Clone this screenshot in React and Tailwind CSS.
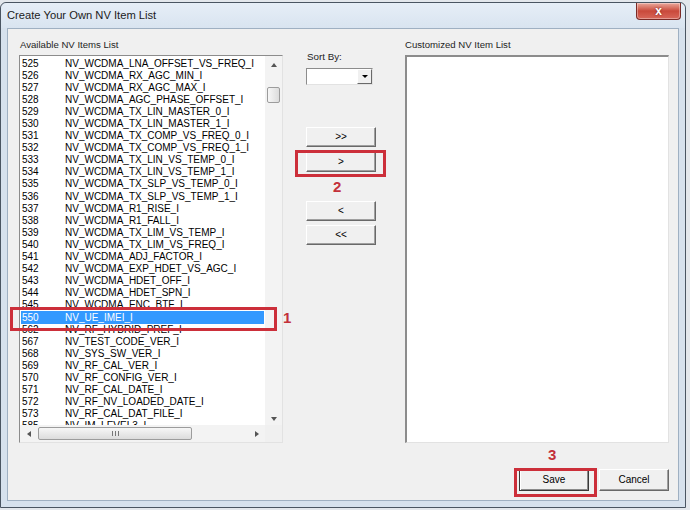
import React from "react";

const items = [
  ["525", "NV_WCDMA_LNA_OFFSET_VS_FREQ_I"],
  ["526", "NV_WCDMA_RX_AGC_MIN_I"],
  ["527", "NV_WCDMA_RX_AGC_MAX_I"],
  ["528", "NV_WCDMA_AGC_PHASE_OFFSET_I"],
  ["529", "NV_WCDMA_TX_LIN_MASTER_0_I"],
  ["530", "NV_WCDMA_TX_LIN_MASTER_1_I"],
  ["531", "NV_WCDMA_TX_COMP_VS_FREQ_0_I"],
  ["532", "NV_WCDMA_TX_COMP_VS_FREQ_1_I"],
  ["533", "NV_WCDMA_TX_LIN_VS_TEMP_0_I"],
  ["534", "NV_WCDMA_TX_LIN_VS_TEMP_1_I"],
  ["535", "NV_WCDMA_TX_SLP_VS_TEMP_0_I"],
  ["536", "NV_WCDMA_TX_SLP_VS_TEMP_1_I"],
  ["537", "NV_WCDMA_R1_RISE_I"],
  ["538", "NV_WCDMA_R1_FALL_I"],
  ["539", "NV_WCDMA_TX_LIM_VS_TEMP_I"],
  ["540", "NV_WCDMA_TX_LIM_VS_FREQ_I"],
  ["541", "NV_WCDMA_ADJ_FACTOR_I"],
  ["542", "NV_WCDMA_EXP_HDET_VS_AGC_I"],
  ["543", "NV_WCDMA_HDET_OFF_I"],
  ["544", "NV_WCDMA_HDET_SPN_I"],
  ["545", "NV_WCDMA_ENC_BTF_I"],
  ["550", "NV_UE_IMEI_I"],
  ["562", "NV_RF_HYBRID_PREF_I"],
  ["567", "NV_TEST_CODE_VER_I"],
  ["568", "NV_SYS_SW_VER_I"],
  ["569", "NV_RF_CAL_VER_I"],
  ["570", "NV_RF_CONFIG_VER_I"],
  ["571", "NV_RF_CAL_DATE_I"],
  ["572", "NV_RF_NV_LOADED_DATE_I"],
  ["573", "NV_RF_CAL_DAT_FILE_I"],
  ["585", "NV_IM_LEVEL3_I"],
];

// classic 3D push button
const pushBtn =
  "flex items-center justify-center w-[70px] h-[20px] border border-t-white border-l-white border-r-[#696969] border-b-[#696969] bg-[#f0f0f0] shadow-[inset_-1px_-1px_0_#a0a0a0] text-[10px] leading-none text-black";

function VScroll() {
  return (
    <div className="flex w-[17px] flex-col bg-[#f3f3f3]">
      <div className="flex h-[17px] items-center justify-center">
        <div className="h-0 w-0 border-x-[3.5px] border-b-[4px] border-x-transparent border-b-[#555]" />
      </div>
      <div className="flex flex-1 flex-col items-center pt-[14px]">
        <div className="h-[16px] w-[13px] rounded-[2px] border border-[#9c9c9c] bg-gradient-to-r from-[#f7f7f7] to-[#dcdcdc]" />
      </div>
      <div className="flex h-[17px] items-center justify-center pt-[4px]">
        <div className="h-0 w-0 border-x-[3.5px] border-t-[4px] border-x-transparent border-t-[#555]" />
      </div>
    </div>
  );
}

function HScroll() {
  return (
    <div className="flex h-[17px] flex-1 items-center bg-[#f3f3f3]">
      <div className="flex h-full w-[17px] items-center justify-center">
        <div className="h-0 w-0 border-y-[3.5px] border-r-[4px] border-y-transparent border-r-[#555]" />
      </div>
      <div className="ml-[1px] flex h-[13px] w-[154px] items-center justify-center gap-[2px] rounded-[2px] border border-[#9c9c9c] bg-gradient-to-b from-[#f7f7f7] to-[#dcdcdc]">
        <div className="h-[5px] w-[1px] bg-[#777]" />
        <div className="h-[5px] w-[1px] bg-[#777]" />
        <div className="h-[5px] w-[1px] bg-[#777]" />
      </div>
      <div className="flex-1" />
      <div className="flex h-full w-[17px] items-center justify-center">
        <div className="h-0 w-0 border-y-[3.5px] border-l-[4px] border-y-transparent border-l-[#555]" />
      </div>
    </div>
  );
}

export default function App() {
  return (
    <div className="relative h-[510px] w-[690px] overflow-hidden bg-[#e3e7ec] font-['Liberation_Sans',Arial,sans-serif] text-black">
      {/* window */}
      <div className="mt-[2px] flex h-[506px] w-[686px] flex-col rounded-t-[6px] border border-[#4a5562] bg-[#d6e1ed]">
        {/* title bar */}
        <div className="flex h-[25px] items-start justify-between rounded-t-[6px] bg-gradient-to-b from-[#e6eef7] to-[#d9e4f0]">
          <span className="pl-[6px] pt-[6px] text-[11.2px] leading-[13px] text-[#1b1b1b]">
            Create Your Own NV Item List
          </span>
          <div className="mr-[4px] flex h-[17px] w-[45px] items-center justify-center rounded-b-[4px] border border-t-0 border-[#7b2a26] bg-gradient-to-b from-[#e9a89c] via-[#c9493b] to-[#d8675a] shadow-[inset_0_0_0_1px_rgba(255,255,255,0.35)]">
            <span className="text-[12px] font-bold leading-none text-white [text-shadow:0_0_2px_#6b1a14]">x</span>
          </div>
        </div>

        {/* client area */}
        <div className="mx-[6px] mb-[6px] flex flex-1 flex-col border border-[#9fb0c2] bg-[#f0f0f0]">
          <div className="flex pl-[11px]">
            {/* available list */}
            <div className="flex flex-col pt-[10px]">
              <span className="pl-[1px] text-[9.6px] leading-[12px] text-[#1e1e1e]">Available NV Items List</span>
              <div className="mt-[4px] flex h-[388px] w-[264px] flex-col border border-[#8c8c8c] border-b-[#e2e2e2] border-r-[#e2e2e2] bg-white">
                <div className="flex min-h-0 flex-1">
                  <div className="flex-1 overflow-hidden px-[1px] pt-[1.5px]">
                    {items.map(([num, name]) => (
                      <div
                        key={num}
                        className={
                          num === "550"
                            ? "flex h-[12.1px] items-center bg-[#3399ff] text-[10px] leading-none text-white"
                            : "flex h-[12.1px] items-center text-[10px] leading-none text-black"
                        }
                      >
                        <span className="w-[44px] pl-[1px]">{num}</span>
                        <span className="whitespace-nowrap">{name}</span>
                      </div>
                    ))}
                  </div>
                  <VScroll />
                </div>
                <div className="flex">
                  <HScroll />
                  <div className="h-[17px] w-[17px] bg-[#f0f0f0]" />
                </div>
              </div>
            </div>

            {/* middle controls */}
            <div className="ml-[23px] flex flex-col pt-[22px]">
              <span className="pl-[1px] text-[9.8px] leading-[12px] text-[#1e1e1e]">Sort By:</span>
              <div className="mt-[5px] flex h-[17px] w-[67px] border border-[#8c8c8c] border-b-[#e2e2e2] border-r-[#e2e2e2] bg-white">
                <div className="flex-1" />
                <div className="flex w-[15px] items-center justify-center border border-t-white border-l-white border-r-[#696969] border-b-[#696969] bg-[#f0f0f0]">
                  <div className="h-0 w-0 border-x-[3px] border-t-[3px] border-x-transparent border-t-black" />
                </div>
              </div>
              <button className={`mt-[42px] ${pushBtn}`}>&gt;&gt;</button>
              <button className={`mt-[5px] ${pushBtn}`}>&gt;</button>
              <button className={`mt-[29px] ${pushBtn}`}>&lt;</button>
              <button className={`mt-[4px] ${pushBtn}`}>&lt;&lt;</button>
            </div>

            {/* customized list */}
            <div className="ml-[29px] flex flex-col pt-[10px]">
              <span className="text-[9.6px] leading-[12px] text-[#1e1e1e]">Customized NV Item List</span>
              <div className="mt-[4px] h-[388px] w-[264px] border border-t-2 border-l-2 border-[#8c8c8c] border-b-[#e2e2e2] border-r-[#e2e2e2] bg-white" />
            </div>
          </div>

          {/* dialog buttons */}
          <div className="mt-[26px] flex justify-end gap-[10px] pr-[9px]">
            <button className="flex h-[22px] w-[70px] items-center justify-center border border-[#3a3a3a] bg-[#f0f0f0] shadow-[inset_1px_1px_0_#ffffff,inset_-1px_-1px_0_#8a8a8a] text-[10px] leading-none text-black">
              Save
            </button>
            <button className="flex h-[22px] w-[70px] items-center justify-center border border-t-white border-l-white border-r-[#696969] border-b-[#696969] bg-[#f0f0f0] shadow-[inset_-1px_-1px_0_#a0a0a0] text-[10px] leading-none text-black">
              Cancel
            </button>
          </div>
        </div>
      </div>

      {/* annotations drawn over the dialog */}
      <div className="absolute left-[10px] top-[307px] h-[24px] w-[267px] border-[3px] border-[#cc2f3a]" />
      <span className="absolute left-[283px] top-[309px] text-[15px] font-bold leading-[18px] text-[#c3303a]">1</span>
      <div className="absolute left-[295px] top-[150px] h-[27px] w-[91px] border-[3px] border-[#cc2f3a]" />
      <span className="absolute left-[333px] top-[178px] text-[15px] font-bold leading-[18px] text-[#c3303a]">2</span>
      <div className="absolute left-[514px] top-[468px] h-[29px] w-[83px] border-[3px] border-[#cc2f3a]" />
      <span className="absolute left-[548px] top-[446px] text-[15px] font-bold leading-[18px] text-[#c3303a]">3</span>
    </div>
  );
}
